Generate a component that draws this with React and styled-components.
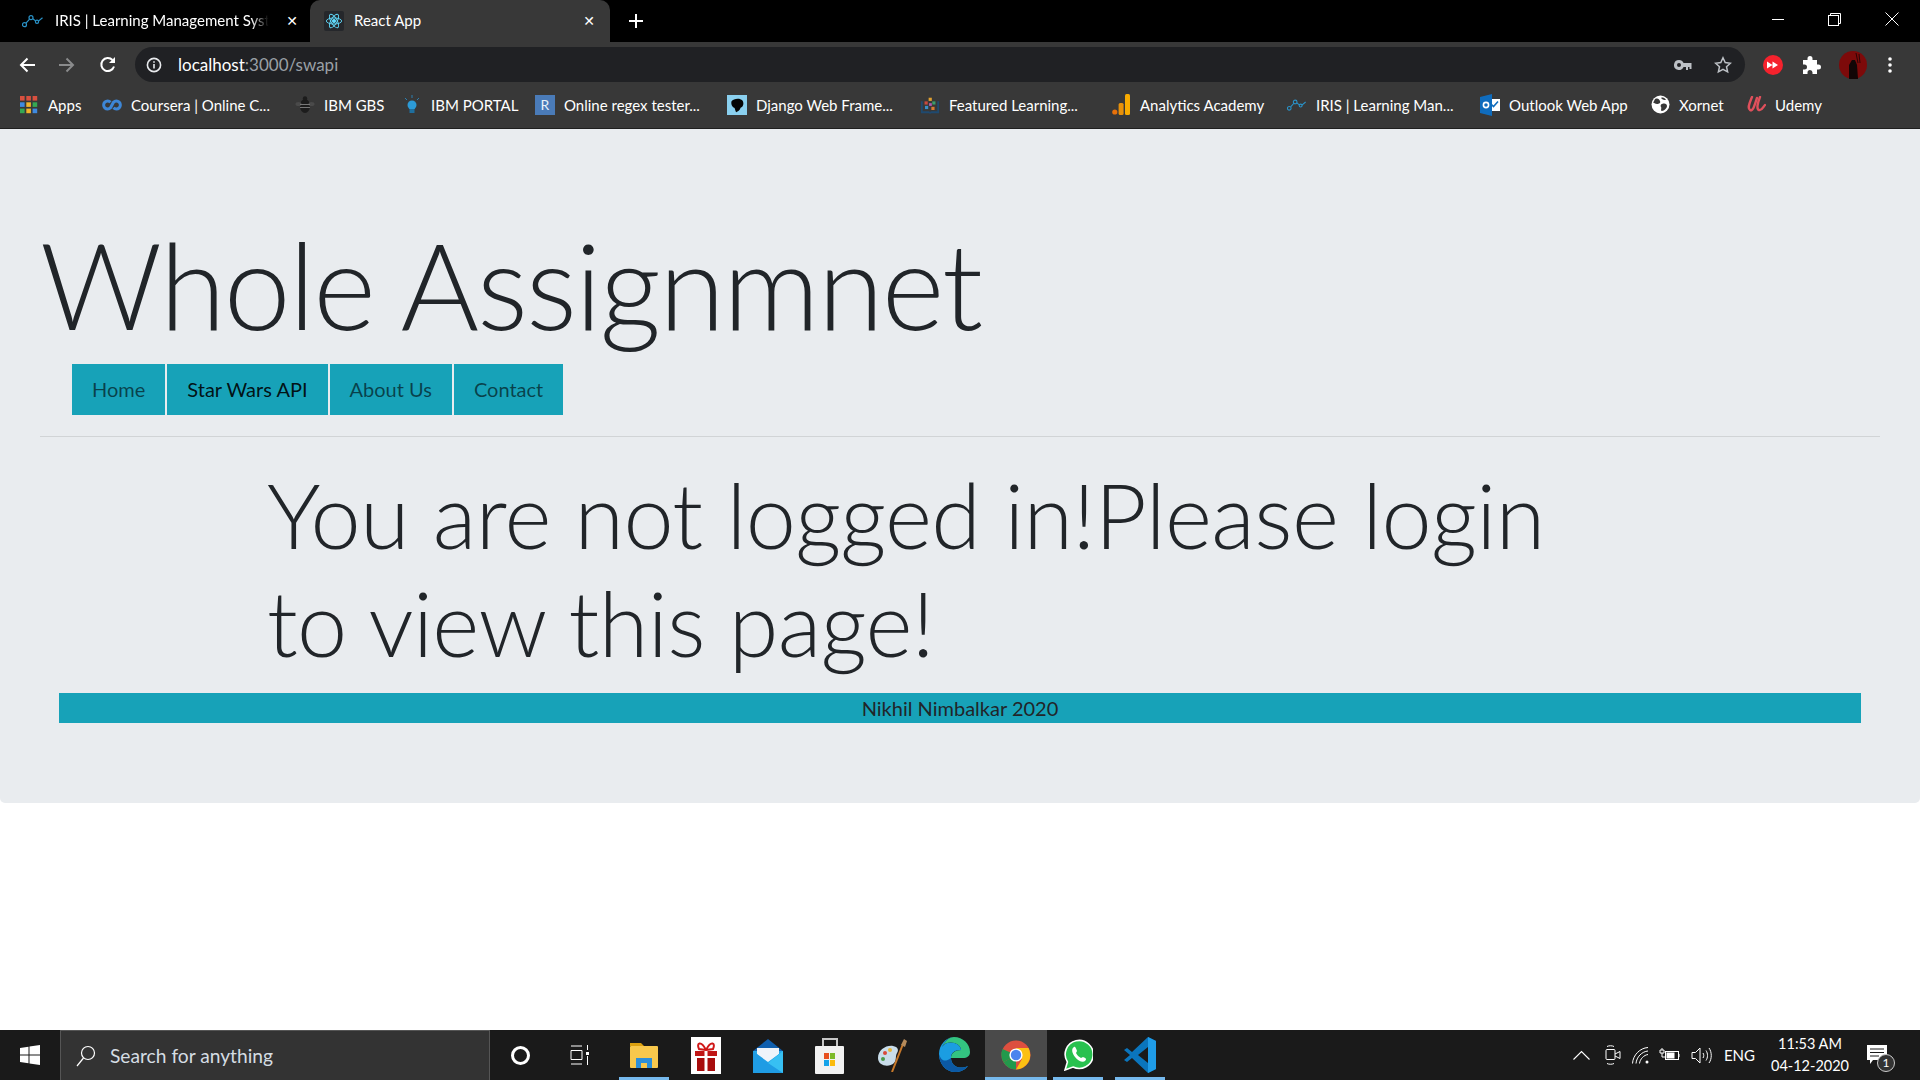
import React from "react";
import styled, { createGlobalStyle } from "styled-components";

const GlobalStyle = createGlobalStyle`
  html, body { margin: 0; padding: 0; background: #fff; }
  body { font-family: Lato, "Open Sans", "Liberation Sans", sans-serif; overflow: hidden; }
`;

const bookmarks = [
  { label: "Apps", icon: "apps", width: 83 },
  { label: "Coursera | Online C...", icon: "coursera", width: 193 },
  { label: "IBM GBS", icon: "bee", width: 107 },
  { label: "IBM PORTAL", icon: "bulb", width: 133 },
  { label: "Online regex tester...", icon: "regex", width: 192 },
  { label: "Django Web Frame...", icon: "django", width: 193 },
  { label: "Featured Learning...", icon: "book", width: 191 },
  { label: "Analytics Academy", icon: "analytics", width: 176 },
  { label: "IRIS | Learning Man...", icon: "iris", width: 193 },
  { label: "Outlook Web App", icon: "outlook", width: 170 },
  { label: "Xornet", icon: "xornet", width: 96 },
  { label: "Udemy", icon: "udemy", width: 90 },
];

const IrisIcon = ({ size = 22 }) => (
  <svg width={size} height={size * 0.7} viewBox="0 0 22 14" fill="none" stroke="#2a93c9" strokeWidth="1.2">
    <circle cx="2.5" cy="11" r="2" />
    <circle cx="9" cy="4" r="2" />
    <circle cx="15" cy="8" r="1.6" />
    <path d="M4 9.5 7.6 5.4M10.8 5 13.6 7.2M16.4 7.4 20.5 4" />
  </svg>
);

const ReactIcon = () => (
  <Favicon>
    <svg width="18" height="18" viewBox="0 0 20 20" fill="none" stroke="#61dafb" strokeWidth="1">
      <circle cx="10" cy="10" r="1.8" fill="#61dafb" />
      <ellipse cx="10" cy="10" rx="8.5" ry="3.4" />
      <ellipse cx="10" cy="10" rx="8.5" ry="3.4" transform="rotate(60 10 10)" />
      <ellipse cx="10" cy="10" rx="8.5" ry="3.4" transform="rotate(120 10 10)" />
    </svg>
  </Favicon>
);

const BookmarkIcon = ({ name }) => {
  switch (name) {
    case "apps": {
      const colors = ["#d9503f", "#d9503f", "#d9503f", "#3f8ae0", "#f3b32a", "#35a853", "#35a853", "#f3b32a", "#3f8ae0"];
      return (
        <svg width="18" height="18" viewBox="0 0 18 18">
          {colors.map((c, i) => (
            <rect key={i} x={(i % 3) * 6.3} y={Math.floor(i / 3) * 6.3} width="4.6" height="4.6" fill={c} />
          ))}
        </svg>
      );
    }
    case "coursera":
      return (
        <svg width="20" height="12" viewBox="0 0 20 12" fill="none" stroke="#3d86d6" strokeWidth="3">
          <path d="M8.5 3.2A4 4 0 1 0 8.5 8.8L11.5 3.2A4 4 0 1 1 11.5 8.8" />
        </svg>
      );
    case "bee":
      return (
        <svg width="20" height="18" viewBox="0 0 20 18" fill="#1c1c1c">
          <ellipse cx="10" cy="10" rx="5" ry="7" />
          <circle cx="10" cy="2.5" r="2.2" />
          <ellipse cx="3.5" cy="8" rx="3" ry="2" fill="#4a4a4a" />
          <ellipse cx="16.5" cy="8" rx="3" ry="2" fill="#4a4a4a" />
          <path d="M5 8h10v1H5zM5 11h10v1H5z" fill="#777" />
        </svg>
      );
    case "bulb":
      return (
        <svg width="18" height="22" viewBox="0 0 18 22" fill="none">
          <circle cx="9" cy="11" r="4.5" fill="#2c9ad6" />
          <rect x="6.5" y="15" width="5" height="4" fill="#1f6f9e" />
          <path d="M9 1v3M2 4l2 2M16 4l-2 2" stroke="#2c7fb0" strokeWidth="1" />
        </svg>
      );
    case "regex":
      return <RegexIcon>R</RegexIcon>;
    case "django":
      return (
        <svg width="22" height="22" viewBox="0 0 22 22">
          <rect width="22" height="22" fill="#8ad0ef" />
          <path d="M5 7c2-3 9-4 12-1 2 3 1 7-2 8-1 3-3 4-5 5-1-2-1-4-2-5-2 0-4-4-3-7z" fill="#050505" />
        </svg>
      );
    case "book":
      return (
        <svg width="22" height="20" viewBox="0 0 22 20">
          <path d="M1 6v13h9l1 1 1-1h9V6h-2v11h-7l-1 1-1-1H3V6z" fill="#1f4a70" />
          <rect x="5" y="6" width="3.500" height="3.500" fill="#c84a3c" />
          <rect x="9.500" y="2" width="3.500" height="3.500" fill="#e0a030" />
          <rect x="13.500" y="6" width="3.500" height="3.500" fill="#3c9c6a" />
          <rect x="5.500" y="11" width="3.500" height="3.500" fill="#3a8fc8" />
          <rect x="10" y="8" width="3" height="3" fill="#b05ab0" />
          <rect x="12.500" y="12" width="3.500" height="3.500" fill="#d97a30" />
        </svg>
      );
    case "analytics":
      return (
        <svg width="18" height="21" viewBox="0 0 18 21">
          <circle cx="2.8" cy="18" r="2.6" fill="#e8710a" />
          <rect x="6.6" y="9" width="5" height="12" rx="1.5" fill="#e8910a" />
          <rect x="13" y="0" width="5" height="21" rx="1.5" fill="#f9ab00" />
        </svg>
      );
    case "iris":
      return <IrisIcon />;
    case "outlook":
      return (
        <svg width="20" height="22" viewBox="0 0 20 22">
          <rect x="8" y="5" width="12" height="12" fill="#fff" />
          <path d="M11 10l2.5 2.5L18 7.5" stroke="#0f6cbd" strokeWidth="1.6" fill="none" />
          <path d="M0 3 12 0v22L0 19z" fill="#0f6cbd" />
          <circle cx="6" cy="11" r="2.6" fill="none" stroke="#fff" strokeWidth="1.6" />
        </svg>
      );
    case "xornet":
      return (
        <svg width="19" height="19" viewBox="0 0 19 19">
          <circle cx="9.5" cy="9.5" r="9" fill="#fff" />
          <path d="M4 4c3-1 4 0 5 2s-1 3-3 3-3-2-4-1zM11 9c3-1 5 0 5 2s-3 5-5 5 0-3-1-4 0-3 1-3zM10 3c2-1 4 0 5 2-2 0-3 0-5-2z" fill="#383838" />
        </svg>
      );
    case "udemy":
      return (
        <svg width="19" height="17" viewBox="0 0 19 17" fill="none" stroke="#e0505c" strokeWidth="2.4" strokeLinecap="round">
          <path d="M5 1C3 6 0 12 3 14s5-6 7-12" />
          <path d="M13 1c-2 5-4 12-1 13s4-3 6-5" />
        </svg>
      );
    default:
      return null;
  }
};

const AppIcon = ({ name }) => {
  switch (name) {
    case "explorer":
      return (
        <svg width="30" height="28" viewBox="0 0 30 28">
          <path d="M1 2h11l3 3H1z" fill="#dba00f" />
          <rect x="1" y="5" width="28" height="22" rx="1" fill="#f8c84c" />
          <path d="M7 27V17h16v10h-5v-5h-6v5z" fill="#2d8fd8" />
        </svg>
      );
    case "gift":
      return (
        <svg width="30" height="37" viewBox="0 0 30 37">
          <rect width="30" height="37" fill="#fff" />
          <path d="M15 13C10 3 5 6 8 12zM15 13c5-10 10-7 7-1z" fill="none" stroke="#d01818" strokeWidth="2" />
          <rect x="4" y="14" width="22" height="5" fill="#c01616" />
          <rect x="6" y="21" width="18" height="13" fill="#a80d0d" />
          <rect x="13.5" y="14" width="3" height="20" fill="#fff" />
        </svg>
      );
    case "mail":
      return (
        <svg width="30" height="35" viewBox="0 0 30 35">
          <path d="M15 1 30 13H0z" fill="#0f5fae" />
          <rect y="13" width="30" height="22" fill="#27a8e8" />
          <path d="M4 10h22v6l-11 8-11-8z" fill="#eef4fa" />
          <path d="M0 13l15 12 15-12v22H0z" fill="#1f9ce4" />
          <path d="M15 25 30 13v22z" fill="#37c0f3" />
        </svg>
      );
    case "store":
      return (
        <svg width="30" height="37" viewBox="0 0 30 37">
          <path d="M8 9V2h14v7" fill="none" stroke="#c8c8c8" strokeWidth="2" />
          <rect y="9" width="29" height="28" rx="1" fill="#f2f2f2" />
          <rect x="9" y="16" width="5" height="6" fill="#e8501f" />
          <rect x="15" y="16" width="5" height="6" fill="#7dba2a" />
          <rect x="9" y="23" width="5" height="6" fill="#15a3ea" />
          <rect x="15" y="23" width="5" height="6" fill="#fbbb0c" />
        </svg>
      );
    case "paint":
      return (
        <svg width="30" height="34" viewBox="0 0 30 34">
          <path d="M1 20c0-8 8-13 15-12 5 1 6 4 4 7-2 3 0 7-3 10-5 5-16 3-16-5z" fill="#c9ddea" />
          <circle cx="8" cy="15" r="2" fill="#d94a3a" />
          <circle cx="13" cy="12" r="2" fill="#e9b53a" />
          <circle cx="6" cy="21" r="2" fill="#4a9a4a" />
          <path d="M15 34 26 6" stroke="#c8792a" strokeWidth="2" />
          <path d="M24 7l3-6 3 2-2 6z" fill="#b58a5a" />
        </svg>
      );
    case "edge":
      return (
        <svg width="31" height="36" viewBox="0 0 31 36">
          <path d="M15 0c9 0 16 7 16 15 0 4-3 6-7 6H12c0-5 4-8 10-8C22 6 8 2 3 10 6 4 10 0 15 0z" fill="#33c481" />
          <path d="M15 0C7 0 0 8 0 17c0 10 7 18 16 18 5 0 10-2 13-6-9 4-17 0-17-8 0-5 3-8 10-8C22 6 8 2 3 10 6 4 10 0 15 0z" fill="#1b9de2" />
          <path d="M12 21c0 8 8 12 17 8-3 4-8 6-13 6-9 0-16-8-16-18 2 6 5 9 12 4z" fill="#0c59a4" />
        </svg>
      );
    case "chrome":
      return (
        <svg width="30" height="30" viewBox="0 0 30 30">
          <circle cx="15" cy="15" r="14.5" fill="#dd4f3f" />
          <path d="M15 15 2.5 22.2A14.5 14.5 0 0 0 15 29.5z" fill="#22994c" />
          <path d="M15 15 2.5 22.2A14.5 14.5 0 0 1 1.5 9z" fill="#22994c" />
          <path d="M15 8h12.5A14.5 14.5 0 0 1 15 29.5L21 19z" fill="#fbc013" />
          <circle cx="15" cy="15" r="6.6" fill="#fff" />
          <circle cx="15" cy="15" r="5.2" fill="#4a84ee" />
        </svg>
      );
    case "whatsapp":
      return (
        <svg width="29" height="32" viewBox="0 0 29 32">
          <path d="M1 31l2.4-8A14 14 0 1 1 9 28z" fill="#28c14f" stroke="#fff" strokeWidth="1.6" />
          <path d="M10 8c-3 2-2 6 1 10s8 6 10 4c2-2 1-3-2-4l-2 1c-2-1-4-3-5-5l1-2c-1-3-2-5-3-4z" fill="#fff" />
        </svg>
      );
    case "vscode":
      return (
        <svg width="32" height="36" viewBox="0 0 32 36">
          <path d="M24 0 32 4v28l-8 4L8 21l-5 4-3-2 6-5-6-5 3-2 5 4z" fill="#0a75bd" />
          <path d="M24 0 32 4v28l-8 4z" fill="#1f9ce8" />
          <path d="M24 10 14 18l10 8z" fill="#1a1a1a" />
        </svg>
      );
    default:
      return null;
  }
};

const apps = [
  { name: "explorer", running: true },
  { name: "gift" },
  { name: "mail" },
  { name: "store" },
  { name: "paint" },
  { name: "edge" },
  { name: "chrome", running: true, active: true },
  { name: "whatsapp", running: true },
  { name: "vscode", running: true },
];

const App = () => {
  return (
    <Screen>
      <GlobalStyle />
      <TabStrip>
        <Tab>
          <IrisIcon />
          <FadedTitle>IRIS | Learning Management System</FadedTitle>
          <TabClose>✕</TabClose>
        </Tab>
        <ActiveTab>
          <ReactIcon />
          <TabTitle>React App</TabTitle>
          <TabClose>✕</TabClose>
        </ActiveTab>
        <NewTab>
          <svg width="14" height="14" viewBox="0 0 14 14" stroke="#fff" strokeWidth="2">
            <path d="M7 0v14M0 7h14" />
          </svg>
        </NewTab>
        <WindowControls>
          <WindowButton>
            <svg width="12" height="12" viewBox="0 0 12 12" stroke="#fff">
              <path d="M0 6.5h12" />
            </svg>
          </WindowButton>
          <WindowButton>
            <svg width="13" height="13" viewBox="0 0 13 13" stroke="#fff" fill="none">
              <rect x="0.5" y="2.5" width="10" height="10" />
              <path d="M2.5 2.500v-2h10v10h-2" />
            </svg>
          </WindowButton>
          <WindowButton>
            <svg width="14" height="14" viewBox="0 0 14 14" stroke="#fff">
              <path d="M.5.5l13 13M13.5.5l-13 13" />
            </svg>
          </WindowButton>
        </WindowControls>
      </TabStrip>

      <Toolbar>
        <NavIcons>
          <svg width="16" height="16" viewBox="0 0 16 16" fill="none" stroke="#fff" strokeWidth="2">
            <path d="M16 8H2M8.5 1.500 2 8l6.500 6.500" />
          </svg>
          <svg width="16" height="16" viewBox="0 0 16 16" fill="none" stroke="#8a8b8c" strokeWidth="2">
            <path d="M0 8h14M7.500 1.500 14 8l-6.500 6.500" />
          </svg>
          <svg width="18" height="18" viewBox="0 0 18 18" fill="none" stroke="#fff" strokeWidth="2">
            <path d="M15 10.500A6.500 6.500 0 1 1 13.500 4" />
            <path d="M16 1v6h-6z" fill="#fff" stroke="none" />
          </svg>
        </NavIcons>
        <AddressBar>
          <svg width="16" height="16" viewBox="0 0 16 16" fill="none" stroke="#e8eaed" strokeWidth="1.600">
            <circle cx="8" cy="8" r="6.600" />
            <path d="M8 7v4.400M8 4.200v1.600" />
          </svg>
          <Url>
            localhost<UrlPath>:3000/swapi</UrlPath>
          </Url>
          <AddressIcons>
            <svg width="18" height="10" viewBox="0 0 18 10" fill="#bdc1c6">
              <path d="M5 0a5 5 0 1 0 4.600 7H12v3h2V7h1.500v2h2V3H9.600A5 5 0 0 0 5 0zm0 3a2 2 0 1 1 0 4 2 2 0 0 1 0-4z" fillRule="evenodd" />
            </svg>
            <svg width="18" height="18" viewBox="0 0 18 18" fill="none" stroke="#bdc1c6" strokeWidth="1.500">
              <path d="M9 1.800l2.200 4.800 5.200.6-3.900 3.500 1.100 5.200L9 13.300l-4.600 2.600 1.100-5.200-3.900-3.500 5.200-.6z" />
            </svg>
          </AddressIcons>
        </AddressBar>
        <ExtensionIcons>
          <svg width="20" height="20" viewBox="0 0 20 20">
            <circle cx="10" cy="10" r="10" fill="#f5222d" />
            <path d="M4 6.500 9.500 10 4 13.500zM9.500 6.500 15 10l-5.500 3.500z" fill="#fff" />
          </svg>
          <svg width="18" height="18" viewBox="0 0 18 18" fill="#fff">
            <path d="M7 0a2.500 2.500 0 0 1 2.500 2.500V4H14v4.500h1.500a2.500 2.500 0 0 1 0 5H14V18H9.500v-1.500a2.500 2.500 0 0 0-5 0V18H0v-4.500h1.500a2.500 2.500 0 0 0 0-5H0V4h4.500V2.500A2.500 2.500 0 0 1 7 0z" />
          </svg>
          <Avatar>
            <svg width="28" height="28" viewBox="0 0 28 28">
              <circle cx="14" cy="14" r="14" fill="#7d0a0a" />
              <path d="M10 28V14l3-5h3l2 5 1 14z" fill="#120606" />
              <path d="M17 2l2 10M20 3l1 9" stroke="#2a0505" />
            </svg>
          </Avatar>
          <svg width="4" height="16" viewBox="0 0 4 16" fill="#fff">
            <circle cx="2" cy="2" r="1.800" />
            <circle cx="2" cy="8" r="1.800" />
            <circle cx="2" cy="14" r="1.800" />
          </svg>
        </ExtensionIcons>
      </Toolbar>

      <BookmarkBar>
        {bookmarks.map((b) => (
          <Bookmark key={b.label} $width={b.width}>
            <BookmarkSlot>
              <BookmarkIcon name={b.icon} />
            </BookmarkSlot>
            <BookmarkLabel>{b.label}</BookmarkLabel>
          </Bookmark>
        ))}
      </BookmarkBar>

      <Jumbotron>
        <Title>Whole Assignmnet</Title>
        <NavBar>
          <NavLink>Home</NavLink>
          <NavLink $current>Star Wars API</NavLink>
          <NavLink>About Us</NavLink>
          <NavLink>Contact</NavLink>
        </NavBar>
        <Rule />
        <Message>
          You are not logged in!Please login
          <br />
          to view this page!
        </Message>
        <Footer>Nikhil Nimbalkar 2020</Footer>
      </Jumbotron>

      <Taskbar>
        <StartButton>
          <svg width="20" height="20" viewBox="0 0 20 20" fill="#fff">
            <path d="M0 3l8.500-1.200v7.700H0zM9.500 1.600 20 0v9.500H9.500zM0 10.500h8.500v7.700L0 17zM9.500 10.500H20V20L9.500 18.400z" />
          </svg>
        </StartButton>
        <SearchBox>
          <svg width="20" height="24" viewBox="0 0 20 24" fill="none" stroke="#fff" strokeWidth="1.200">
            <circle cx="12" cy="9" r="6.500" />
            <path d="M7.500 14 1 22" />
          </svg>
          <SearchText>Search for anything</SearchText>
        </SearchBox>
        <TaskButton>
          <CortanaRing />
        </TaskButton>
        <TaskButton>
          <svg width="20" height="20" viewBox="0 0 20 20" fill="none" stroke="#fff">
            <path d="M1 1h11M1 5.500h11v9H1zM1 19h11M17.500 0v5M17.500 11v9" />
            <rect x="16" y="7" width="3" height="3" fill="#fff" stroke="none" />
          </svg>
        </TaskButton>
        <AppList>
          {apps.map((a) => (
            <AppSlot key={a.name} $running={a.running} $active={a.active}>
              <AppIcon name={a.name} />
            </AppSlot>
          ))}
        </AppList>
        <Tray>
          <TrayIcons>
            <TrayChevron>
              <svg width="17" height="10" viewBox="0 0 17 10" fill="none" stroke="#fff" strokeWidth="1.100">
                <path d="M.5 9.500 8.500 1.500l8 8" />
              </svg>
            </TrayChevron>
            <svg width="16" height="20" viewBox="0 0 16 20" fill="none" stroke="#fff">
              <rect x="1" y="4.500" width="9" height="10" rx="1" />
              <path d="M10 9l5-2.500v7L10 11M2 1.500c2-1 5-1 7 0M2 18.500c2 1 5 1 7 0" />
            </svg>
            <svg width="17" height="17" viewBox="0 0 17 17" fill="none" stroke="#fff">
              <path d="M.5 16.500C1 8 8 1 16 .5M4 16.500C4.500 10 10 4.500 16 4M7.500 16.500C8 12 12 8 16 7.500" />
              <circle cx="15" cy="15" r="1.500" fill="#fff" stroke="none" />
            </svg>
            <svg width="21" height="14" viewBox="0 0 21 14" fill="none" stroke="#fff">
              <rect x="6.500" y="3.500" width="13" height="8" />
              <rect x="8" y="5" width="7" height="5" fill="#fff" />
              <path d="M20 6v3M3 0v2M1 2h4v3H1zM3 5v4h3" />
            </svg>
            <svg width="21" height="17" viewBox="0 0 21 17" fill="none" stroke="#fff">
              <path d="M1 5.500h3.500L9 1v15l-4.500-4.500H1zM12 6c1 1.500 1 3.500 0 5M15 3.500c2 3 2 7 0 10M18 1c3 4 3 11 0 15" />
            </svg>
          </TrayIcons>
          <TrayText>ENG</TrayText>
          <Clock>
            <span>11:53 AM</span>
            <span>04-12-2020</span>
          </Clock>
          <Notifications>
            <svg width="21" height="20" viewBox="0 0 21 20">
              <path d="M0 0h20v15H6l-3 4v-4H0z" fill="#fff" />
              <path d="M3 4h14M3 7.500h14M3 11h9" stroke="#1a1a1a" />
            </svg>
            <NotificationBadge>1</NotificationBadge>
          </Notifications>
        </Tray>
      </Taskbar>
    </Screen>
  );
};

export default App;

const Screen = styled.div`
  display: flex;
  flex-direction: column;
  height: 100vh;
  overflow: hidden;
`;

const TabStrip = styled.div`
  display: flex;
  align-items: flex-end;
  height: 42px;
  flex: none;
  background: #000;
  padding-left: 8px;
  color: #fff;
`;

const Tab = styled.div`
  display: flex;
  align-items: center;
  gap: 11px;
  width: 302px;
  height: 42px;
  box-sizing: border-box;
  padding: 0 10px 0 14px;
`;

const ActiveTab = styled(Tab)`
  width: 300px;
  gap: 10px;
  background: #383838;
  border-radius: 10px 10px 0 0;
  padding: 0 13px 0 14px;
`;

const Favicon = styled.span`
  display: flex;
  align-items: center;
  justify-content: center;
  width: 20px;
  height: 20px;
  background: #25272b;
  border-radius: 2px;
`;

const TabTitle = styled.span`
  flex: 1;
  min-width: 0;
  overflow: hidden;
  white-space: nowrap;
  font-size: 15px;
  line-height: 40px;
  height: 40px;
  margin-bottom: 2px;
`;

const FadedTitle = styled(TabTitle)`
  mask-image: linear-gradient(to right, #000 90%, transparent 98%);
`;

const TabClose = styled.span`
  font-size: 14px;
  font-weight: 700;
  width: 16px;
  text-align: center;
  font-family: "DejaVu Sans", sans-serif;
`;

const NewTab = styled.div`
  display: flex;
  align-items: center;
  height: 42px;
  margin-left: 19px;
`;

const WindowControls = styled.div`
  display: flex;
  margin-left: auto;
  height: 42px;
`;

const WindowButton = styled.div`
  display: flex;
  align-items: center;
  justify-content: center;
  width: 57px;
  height: 38px;
`;

const Toolbar = styled.div`
  display: flex;
  align-items: center;
  height: 45px;
  flex: none;
  background: #383838;
`;

const NavIcons = styled.div`
  display: flex;
  align-items: center;
  gap: 24px;
  width: 135px;
  box-sizing: border-box;
  padding-left: 19px;
`;

const AddressBar = styled.div`
  display: flex;
  align-items: center;
  gap: 16px;
  width: 1610px;
  height: 35px;
  box-sizing: border-box;
  padding: 0 13px 0 11px;
  background: #202124;
  border-radius: 18px;
`;

const Url = styled.span`
  flex: 1;
  color: #fff;
  font-size: 17px;
`;

const UrlPath = styled.span`
  color: #9aa0a6;
`;

const AddressIcons = styled.div`
  display: flex;
  align-items: center;
  gap: 22px;
`;

const ExtensionIcons = styled.div`
  display: flex;
  align-items: center;
  gap: 20px;
  padding-left: 18px;
`;

const Avatar = styled.span`
  display: flex;
  margin: 0 1px 0 -2px;
`;

const BookmarkBar = styled.div`
  display: flex;
  align-items: center;
  height: 41px;
  flex: none;
  padding: 0 0 0 19px;
  background: #383838;
  border-bottom: 1px solid #1f1f1f;
`;

const Bookmark = styled.div`
  display: flex;
  align-items: center;
  width: ${(p) => p.$width}px;
  height: 35px;
  margin-bottom: 6px;
  flex: none;
  color: #fff;
`;

const BookmarkSlot = styled.span`
  display: flex;
  align-items: center;
  justify-content: center;
  width: 20px;
  margin-right: 9px;
  flex: none;
`;

const BookmarkLabel = styled.span`
  font-size: 15px;
  white-space: nowrap;
`;

const Jumbotron = styled.main`
  flex: none;
  padding: 80px 40px;
  background: #e9ecef;
  border-radius: 0 0 5px 5px;
  color: #212529;
`;

const Title = styled.h1`
  margin: 3px 0 8px;
  font-size: 120px;
  font-weight: 300;
  line-height: 144px;
  letter-spacing: -2px;
  white-space: nowrap;
`;

const NavBar = styled.nav`
  display: flex;
  gap: 2px;
  padding-left: 32px;
`;

const NavLink = styled.a`
  display: block;
  padding: 0 20px;
  height: 51px;
  line-height: 51px;
  background: #17a2b8;
  font-size: 20px;
  font-weight: 400;
  color: ${(p) => (p.$current ? "rgba(0, 0, 0, 0.9)" : "rgba(0, 0, 0, 0.6)")};
`;

const Rule = styled.hr`
  margin: 21px 0 23px;
  border: 0;
  border-top: 1px solid rgba(0, 0, 0, 0.1);
`;

const Message = styled.h2`
  margin: 0 0 17px;
  padding-left: 227px;
  font-size: 90px;
  font-weight: 300;
  line-height: 108px;
  letter-spacing: -0.6px;
  white-space: nowrap;
`;

const Footer = styled.footer`
  margin: 0 19px;
  height: 30px;
  line-height: 30px;
  background: #17a2b8;
  text-align: center;
  font-size: 20px;
  font-weight: 400;
`;

const Taskbar = styled.footer`
  display: flex;
  align-items: stretch;
  height: 50px;
  flex: none;
  margin-top: auto;
  background: #1a1a1a;
  color: #fff;
`;

const StartButton = styled.div`
  display: flex;
  align-items: center;
  justify-content: center;
  width: 60px;
  flex: none;
`;

const SearchBox = styled.div`
  display: flex;
  align-items: center;
  gap: 14px;
  width: 430px;
  box-sizing: border-box;
  padding-left: 15px;
  background: #333;
  border: 1px solid #555;
  border-bottom: 0;
  flex: none;
`;

const SearchText = styled.span`
  color: #d5dde3;
  font-size: 19.2px;
`;

const TaskButton = styled.div`
  display: flex;
  align-items: center;
  justify-content: center;
  width: 60px;
  flex: none;
`;

const CortanaRing = styled.span`
  display: block;
  width: 13px;
  height: 13px;
  border: 3px solid #fff;
  border-radius: 50%;
`;

const AppList = styled.div`
  display: flex;
  margin-left: 3px;
`;

const AppSlot = styled.div`
  position: relative;
  display: flex;
  align-items: center;
  justify-content: center;
  width: 62px;
  background: ${(p) => (p.$active ? "#4a4a4a" : "transparent")};
  &::after {
    content: "";
    display: ${(p) => (p.$running ? "block" : "none")};
    position: absolute;
    left: ${(p) => (p.$active ? "0" : "6px")};
    right: ${(p) => (p.$active ? "0" : "6px")};
    bottom: 0;
    height: 3px;
    background: #76b9ed;
  }
`;

const Tray = styled.div`
  display: flex;
  align-items: center;
  gap: 12px;
  margin-left: auto;
`;

const TrayIcons = styled.div`
  display: flex;
  align-items: center;
  gap: 10.5px;
`;

const TrayChevron = styled.span`
  display: flex;
  margin-right: 4.5px;
`;

const TrayText = styled.span`
  font-size: 15px;
`;

const Clock = styled.div`
  display: flex;
  flex-direction: column;
  align-items: center;
  gap: 2px;
  width: 86px;
  font-size: 14.5px;
  line-height: 20px;
`;

const Notifications = styled.div`
  position: relative;
  display: flex;
  width: 34px;
  margin: 0 19px 0 2px;
`;

const NotificationBadge = styled.span`
  position: absolute;
  left: 10px;
  top: 9px;
  width: 18px;
  height: 18px;
  box-sizing: border-box;
  border: 1px solid #ccc;
  border-radius: 50%;
  background: #333;
  font-size: 12px;
  line-height: 16px;
  text-align: center;
`;

const RegexIcon = styled.span`
  display: block;
  width: 20px;
  height: 20px;
  line-height: 20px;
  background: #4a7bb8;
  color: #e8f0f8;
  font-size: 14px;
  text-align: center;
`;
